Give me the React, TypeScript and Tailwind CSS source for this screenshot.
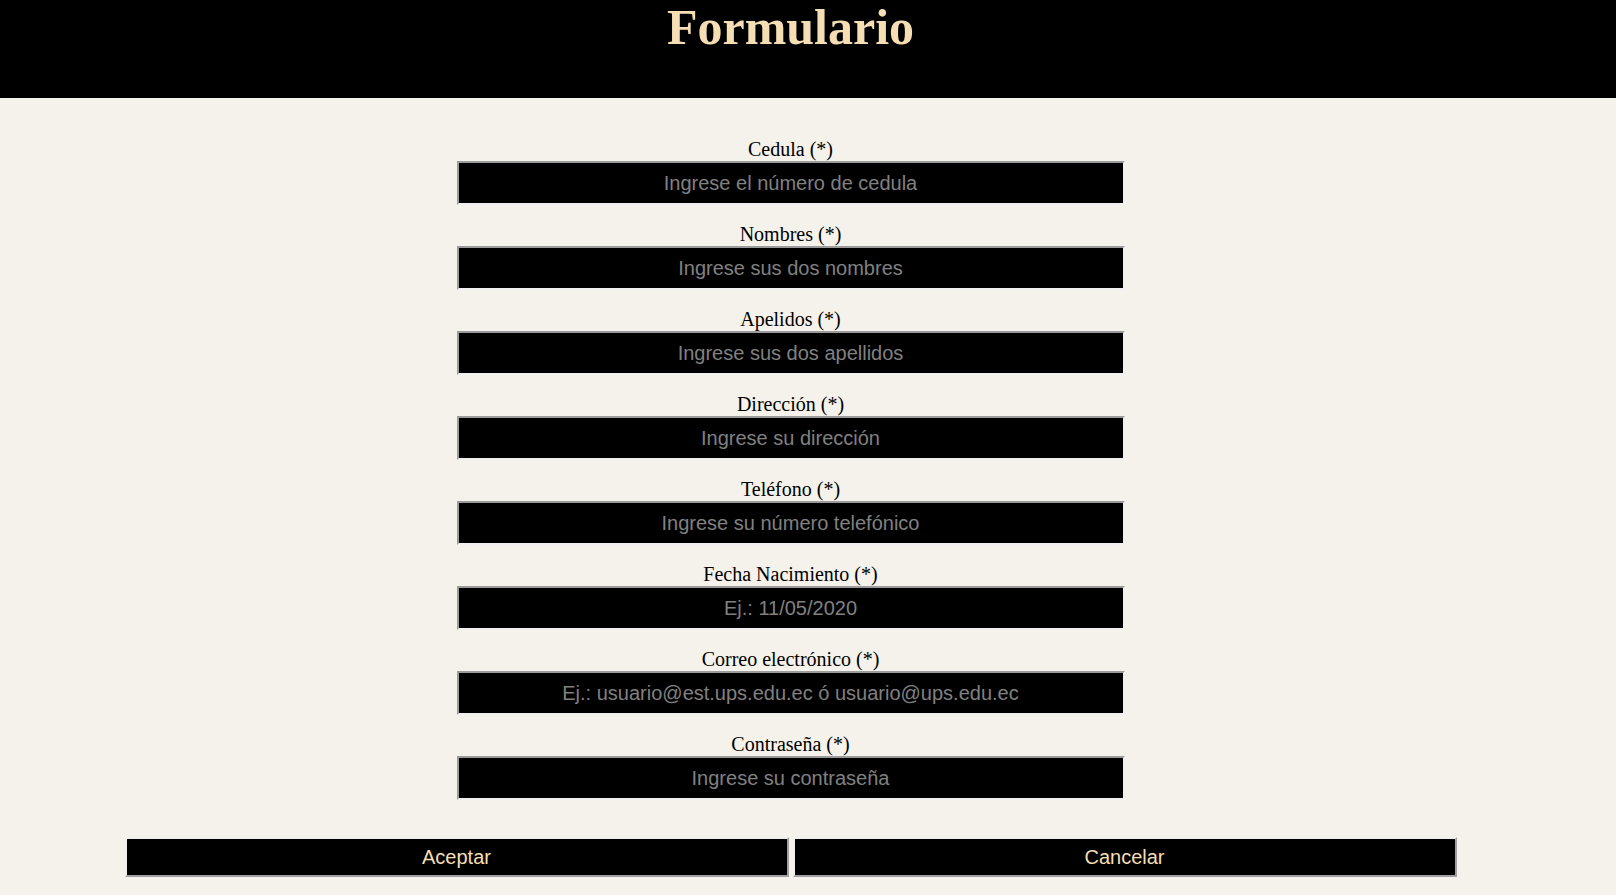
const campos = [
    { label: "Cedula (*)", placeholder: "Ingrese el número de cedula" },
    { label: "Nombres (*)", placeholder: "Ingrese sus dos nombres" },
    { label: "Apelidos (*)", placeholder: "Ingrese sus dos apellidos" },
    { label: "Dirección (*)", placeholder: "Ingrese su dirección" },
    { label: "Teléfono (*)", placeholder: "Ingrese su número telefónico" },
    { label: "Fecha Nacimiento (*)", placeholder: "Ej.: 11/05/2020" },
    { label: "Correo electrónico (*)", placeholder: "Ej.: usuario@est.ups.edu.ec ó usuario@ups.edu.ec" },
    { label: "Contraseña (*)", placeholder: "Ingrese su contraseña" },
]

const App = () => {
    return (
        <div className="min-h-screen bg-[#f5f2eb] font-['Liberation_Serif',serif]">
            {/* Header */}
            <header className="h-[98px] bg-black">
                <h1 className="w-[1581px] text-center text-[50px] leading-[55px] font-bold text-[#f5deb3]">
                    Formulario
                </h1>
            </header>

            <div className="w-[1581px] pt-[40px]">
                <form className="flex flex-col items-center gap-[18px]">
                    {campos.map((c) => (
                        <div key={c.label} className="flex flex-col items-center">
                            <label className="text-[20px] leading-[23px] text-black">{c.label}</label>
                            <input
                                type="text"
                                placeholder={c.placeholder}
                                className="w-[668px] h-[44px] bg-black text-center text-[20px] text-white font-['Liberation_Sans',Arial,sans-serif] placeholder:text-[#808080] border-2 border-t-[#9b9b9b] border-l-[#9b9b9b] border-b-[#f0f0f0] border-r-[#f0f0f0] outline-none"
                            />
                        </div>
                    ))}
                </form>

                <div className="flex justify-center gap-[4px] mt-[37px]">
                    <button className="w-[664px] h-[40px] bg-black text-[20px] text-[#f5deb3] font-['Liberation_Sans',Arial,sans-serif] border-2 border-t-[#f0f0f0] border-l-[#f0f0f0] border-b-[#a0a0a0] border-r-[#a0a0a0]">
                        Aceptar
                    </button>
                    <button className="w-[664px] h-[40px] bg-black text-[20px] text-[#f5deb3] font-['Liberation_Sans',Arial,sans-serif] border-2 border-t-[#f0f0f0] border-l-[#f0f0f0] border-b-[#a0a0a0] border-r-[#a0a0a0]">
                        Cancelar
                    </button>
                </div>
            </div>
        </div>
    )
}

export default App
